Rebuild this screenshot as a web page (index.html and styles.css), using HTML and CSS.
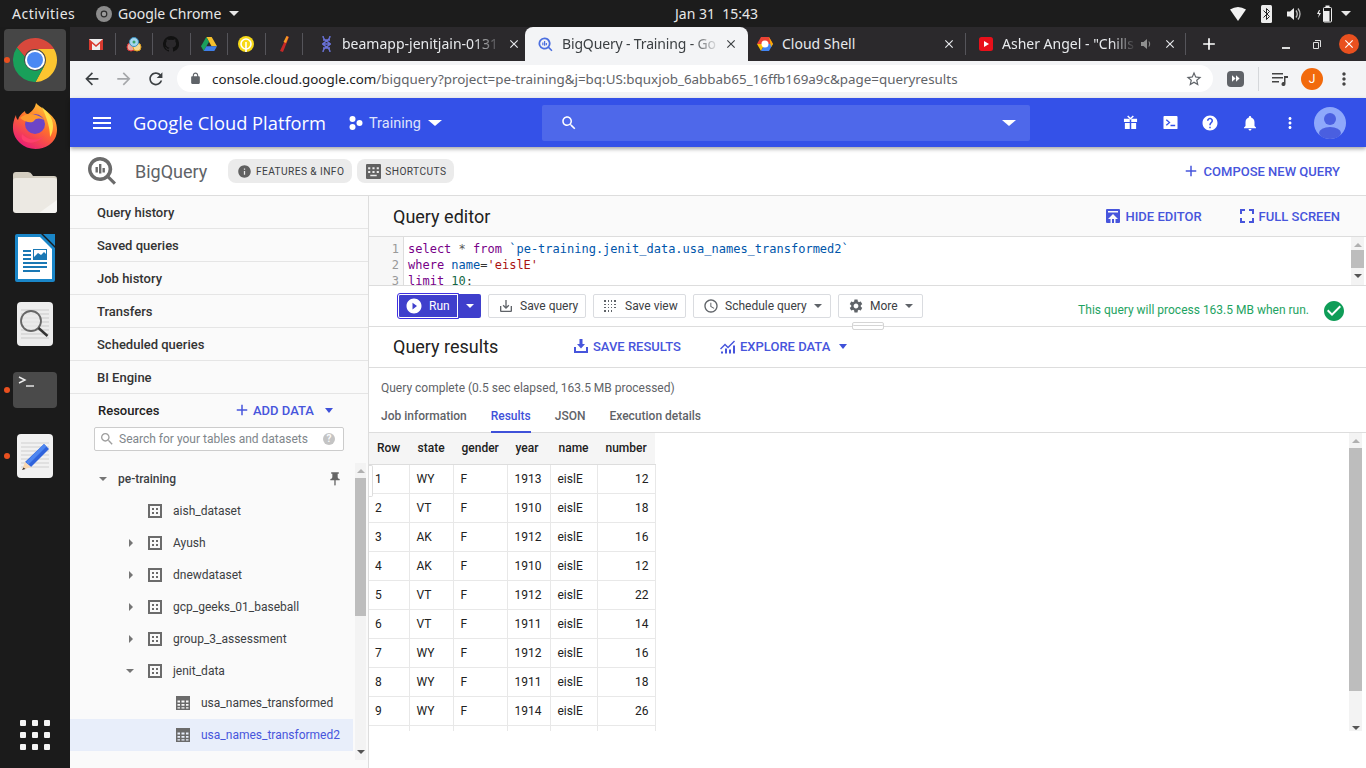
FILE: index.html
```html
<!DOCTYPE html>
<html lang="en">
<head>
    <meta charset="UTF-8">
    <title>BigQuery - Training - Google Cloud Platform</title>
    <link rel="stylesheet" href="styles.css">
</head>
<body>
    <!-- material icons used more than once -->
    <svg class="icon-sheet" aria-hidden="true">
        <symbol id="i-add" viewBox="0 0 24 24"><path d="M19 13h-6v6h-2v-6H5v-2h6V5h2v6h6v2z"/></symbol>
        <symbol id="i-close" viewBox="0 0 24 24"><path d="M19 6.41L17.59 5 12 10.59 6.41 5 5 6.41 10.59 12 5 17.59 6.41 19 12 13.41 17.59 19 19 17.59 13.41 12z"/></symbol>
        <symbol id="i-more" viewBox="0 0 24 24"><path d="M12 8c1.1 0 2-.9 2-2s-.9-2-2-2-2 .9-2 2 .9 2 2 2zm0 2c-1.1 0-2 .9-2 2s.9 2 2 2 2-.9 2-2-.9-2-2-2zm0 6c-1.1 0-2 .9-2 2s.9 2 2 2 2-.9 2-2-.9-2-2-2z"/></symbol>
        <symbol id="i-save" viewBox="0 0 24 24"><path d="M19 12v7H5v-7H3v7c0 1.1.9 2 2 2h14c1.1 0 2-.9 2-2v-7h-2zm-6 .67l2.59-2.58L17 11.5l-5 5-5-5 1.41-1.41L11 12.67V3h2z"/></symbol>
        <symbol id="i-dataset" viewBox="0 0 14 14"><path fill-rule="evenodd" d="M0 0h14v14H0zM2 2v10h10V2z"/><path d="M4 4h2v2H4zM8 4h2v2H8zM4 8h2v2H4zM8 8h2v2H8z"/></symbol>
        <symbol id="i-table" viewBox="0 0 14 14"><path fill-rule="evenodd" d="M0 0h14v14H0zM1.5 4.5v2H4v-2zM5.5 4.5v2h3v-2zM10 4.5v2h2.5v-2zM1.5 8v1.8H4V8zM5.5 8v1.8h3V8zM10 8v1.8h2.5V8zM1.5 11.3v1.2H4v-1.2zM5.5 11.3v1.2h3v-1.2zM10 11.3v1.2h2.5v-1.2z"/></symbol>
        <symbol id="i-bq" viewBox="0 0 30 30"><path d="M13 1a12 12 0 1 0 7.5 21.4l6.3 6.3 2.2-2.2-6.3-6.3A12 12 0 0 0 13 1zm0 3.400a8.600 8.600 0 1 1 0 17.2 8.600 8.600 0 0 1 0-17.2z"/><path d="M8.500 11h2.400v5.500H8.500zM12 8h2.400v9.500H12zM15.500 12h2.400v4.500h-2.400z"/></symbol>
    </svg>

    <div class="topbar">
        <span class="activities">Activities</span>
        <svg class="app-mark" viewBox="0 0 16 16"><circle cx="8" cy="8" r="8" fill="#8c8c8c"/><circle cx="8" cy="8" r="3.4" fill="#2b2b2b"/><circle cx="8" cy="8" r="2.2" fill="#9c9c9c"/></svg>
        <span class="app-name">Google Chrome</span>
        <span class="caret caret-top"></span>
        <span class="clock">Jan 31&nbsp; 15:43</span>
        <div class="tray">
            <svg width="16" height="14" viewBox="0 0 16 14"><path d="M0 2.5Q8-2.500 16 2.5L8 14z" fill="#f2f2f2"/></svg>
            <svg width="11" height="18" viewBox="0 0 11 18"><rect width="11" height="18" rx="1.5" fill="#ececec"/><path d="M2.5 5.500l6 6-3 3v-11l3 3-6 6" fill="none" stroke="#222" stroke-width="1"/></svg>
            <svg width="14" height="14" viewBox="0 0 14 14"><path d="M0 4.500h3L7 1v12L3 9.500H0z" fill="#eee"/><path d="M9 3.500q2.500 3.500 0 7M11 1.500q4 5.500 0 11" fill="none" stroke="#bbb" stroke-width="1.3"/></svg>
            <svg width="17" height="18" viewBox="0 0 17 18"><path d="M3 5L1 9h2l-1 4 3-5H3l1-3z" fill="#eee"/><rect x="7.5" y="2.5" width="8" height="14.5" rx="1" fill="none" stroke="#eee"/><rect x="7.500" y="6" width="6" height="10.5" fill="#eee"/><rect x="9.500" y="0.500" width="4" height="2" fill="#eee"/></svg>
            <span class="caret caret-top tray-caret"></span>
        </div>
    </div>

    <div class="desktop">
        <nav class="dock">
            <div class="dock-item active">
                <span class="run-dot"></span>
                <svg width="44" height="44" viewBox="0 0 44 44">
                    <path d="M3.900 9.500A22 22 0 0 1 41.050 11H22a11 11 0 0 0-10.400 7.600z" fill="#d8483c"/>
                    <path d="M41.050 11A22 22 0 0 1 22.500 44l9-16.500A11 11 0 0 0 22 11z" fill="#fbc530"/>
                    <path d="M3.900 9.500l7.700 9.100a11 11 0 0 0 19.900 8.900L22.500 44A22 22 0 0 1 3.900 9.500z" fill="#19a05a"/>
                    <circle cx="22" cy="22" r="10" fill="#fff"/><circle cx="22" cy="22" r="8" fill="#4a89f3"/>
                </svg>
            </div>
            <div class="dock-item">
                <svg width="46" height="46" viewBox="0 0 46 46">
                    <defs>
                        <linearGradient id="ff-body" x1="0.8" y1="0" x2="0.2" y2="1"><stop offset="0" stop-color="#ffd43a"/><stop offset=".45" stop-color="#ff6f2c"/><stop offset="1" stop-color="#e8147e"/></linearGradient>
                    </defs>
                    <path d="M24 0c3 4 12 7 19 17 4 10 2 20-6 25-9 6-22 5-29-2C0 33-1 22 4 12c0 3 1 4 2 5 1-4 3-6 7-9 0 2 1 3 3 3 3-2 7-5 8-11z" fill="url(#ff-body)"/>
                    <path d="M30 4c5 5 11 10 11 19 0 4-1 8-3 11 0-8-2-16-8-30z" fill="#ffe04a"/>
                    <circle cx="23" cy="21" r="10" fill="#6d45c7"/>
                    <path d="M8 15c4-4 11-5 16-3 4 1 7 3 8 5-4-2-8-2-10 1-2 2-8 2-14-3z" fill="#ff9a2e"/>
                    <path d="M10 31c5 6 15 8 22 2-4 5-12 9-20 5-2-1-3-4-2-7z" fill="#ff3f6c"/>
                </svg>
            </div>
            <div class="dock-item">
                <svg width="44" height="41" viewBox="0 0 44 41"><path d="M3 0h12q3 0 4 2.500l1 1.500h21q3 0 3 3v5H0V3q0-3 3-3z" fill="#d3cdc0"/><rect y="6" width="44" height="35" rx="3" fill="#ece9e3"/><path d="M44 28v10q0 3-3 3H26z" fill="#f6f5f2"/></svg>
            </div>
            <div class="dock-item">
                <svg width="40" height="48" viewBox="0 0 40 48"><path d="M2 0h24l14 14v32a2 2 0 0 1-2 2H2a2 2 0 0 1-2-2V2a2 2 0 0 1 2-2z" fill="#1a86c8"/><path d="M3 3h22l12 12v30H3z" fill="#fff"/><path d="M28 0h12v12z" fill="#1a86c8"/><g fill="#1a78b4"><path d="M8 16h8v2H8zM8 20h8v2H8zM8 24h8v2H8zM8 28h24v2H8zM8 32h24v2H8zM8 36h17v2H8z"/><path fill-rule="evenodd" d="M18 15h14v11H18zM19 16v7l4-4 3 2 3-3 2 2v-4z"/></g></svg>
            </div>
            <div class="dock-item">
                <svg width="36" height="44" viewBox="0 0 36 44"><rect width="36" height="44" rx="4" fill="#ececec"/><path d="M4 8h28M4 12h28M4 16h28M4 20h28M4 24h28M4 28h28M4 32h28M4 36h28" stroke="#c9c9c9"/><circle cx="14" cy="19" r="10" fill="#e9e9e9" fill-opacity=".7" stroke="#666" stroke-width="1.8"/><path d="M21.5 26l9 8" stroke="#333" stroke-width="2.4"/></svg>
            </div>
            <div class="dock-item">
                <span class="run-dot"></span>
                <svg width="44" height="36" viewBox="0 0 44 36"><rect width="44" height="36" rx="4" fill="#4a4a4a"/><path d="M6 5l6 3-6 3" fill="none" stroke="#eee" stroke-width="1.4"/><path d="M13 14h8" stroke="#eee" stroke-width="1.4"/></svg>
            </div>
            <div class="dock-item">
                <span class="run-dot"></span>
                <svg width="36" height="44" viewBox="0 0 36 44"><rect width="36" height="44" rx="4" fill="#f1f1f1"/><path d="M4 9h28M4 13h28M4 17h28M4 21h28M4 25h28M4 29h28M4 33h28" stroke="#cfcfcf"/><path d="M27 10l5 5-18 18-6-5z" fill="#2f63dc"/><path d="M27 10l2.5 2.500-18 18L9 28z" fill="#4d86f0"/><path d="M8 28l6 5-9 3z" fill="#f8d7b0"/><path d="M5 36l1.500-2.500 2 1.500z" fill="#333"/></svg>
            </div>
            <div class="app-grid">
                <span></span><span></span><span></span>
                <span></span><span></span><span></span>
                <span></span><span></span><span></span>
            </div>
        </nav>

        <div class="window">
            <div class="tabstrip">
                <div class="pin"><svg width="14" height="11" viewBox="0 0 14 11"><rect width="14" height="11" fill="#eee"/><path d="M0 0l7 6 7-6v11h-3V4.500L7 8 3 4.500V11H0z" fill="#d93a2f"/></svg></div>
                <div class="pin"><svg width="16" height="16" viewBox="0 0 16 16"><circle cx="5" cy="11" r="4" fill="#e9a8a0" stroke="#d33" stroke-width="1"/><circle cx="11" cy="11" r="4" fill="#f6d88f" stroke="#e0a020" stroke-width="1"/><circle cx="8" cy="6" r="4.5" fill="#a5d7ef" stroke="#3a8fc0" stroke-width="1"/><circle cx="8" cy="6" r="1.5" fill="#38a169"/></svg></div>
                <div class="pin"><svg width="16" height="16" viewBox="0 0 16 16"><path d="M8 0a8 8 0 0 0-2.500 15.600c.4.100.5-.2.500-.4v-1.400c-2.200.5-2.700-1-2.700-1-.4-.9-.9-1.200-.9-1.200-.7-.5.100-.5.100-.5.800.1 1.200.8 1.200.8.700 1.200 1.900.9 2.300.7.100-.5.300-.9.500-1.100-1.800-.2-3.600-.9-3.600-4 0-.9.300-1.600.8-2.100-.1-.2-.4-1 .1-2.100 0 0 .7-.2 2.200.8a7.500 7.500 0 0 1 4 0c1.500-1 2.200-.8 2.200-.8.400 1.100.200 1.900.1 2.100.5.600.8 1.300.8 2.100 0 3.100-1.900 3.800-3.700 4 .3.300.6.800.6 1.500v2.200c0 .2.100.5.600.4A8 8 0 0 0 8 0z" fill="#111"/></svg></div>
                <div class="pin"><svg width="16" height="14" viewBox="0 0 16 14"><path d="M5.300 0h5.400L16 9.300h-5.400z" fill="#f6c02c"/><path d="M5.300 0L0 9.300 2.700 14l5.300-9.300z" fill="#1a9f5c"/><path d="M2.700 14h10.600L16 9.300H5.400z" fill="#3f7ee8"/></svg></div>
                <div class="pin"><svg width="16" height="16" viewBox="0 0 16 16"><circle cx="8" cy="8" r="8" fill="#f7d917"/><circle cx="8" cy="8" r="5" fill="none" stroke="#fff" stroke-width="1.6"/><path d="M8 6v10" stroke="#fff" stroke-width="1.6"/></svg></div>
                <div class="pin"><svg width="10" height="16" viewBox="0 0 10 16"><path d="M8 0l2 1-6 15-3-1z" fill="#c62828"/><path d="M7.500 0l2 1-2.500 6-2.500-1z" fill="#f59a23"/></svg></div>
                <div class="tab beam-tab">
                    <svg width="13" height="18" viewBox="0 0 13 18"><path d="M3 1c0 5 7 6 7 8s-7 3-7 8M10 1c0 5-7 6-7 8s7 3 7 8M3 5h7M2 9h9M3 13h7" fill="none" stroke="#6a72d8" stroke-width="1.4"/></svg>
                    <span class="tab-title">beamapp-jenitjain-0131</span>
                    <svg class="tab-close"><use href="#i-close"/></svg>
                </div>
                <div class="tab tab-active">
                    <svg class="bq-fav"><use href="#i-bq"/></svg>
                    <span class="tab-title">BigQuery - Training - Go</span>
                    <svg class="tab-close"><use href="#i-close"/></svg>
                </div>
                <div class="tab shell-tab">
                    <svg width="16" height="16" viewBox="0 0 16 16"><path d="M4 1h8l4 7H0z" fill="#ea4335"/><path d="M0 8h8l-4 7z" fill="#fbbc05"/><path d="M16 8l-4 7H4l4-7z" fill="#4285f4"/><path d="M12 1l4 7-2 3z" fill="#f9ab00"/><circle cx="8" cy="8" r="3.5" fill="#fff"/></svg>
                    <span class="tab-title">Cloud Shell</span>
                    <svg class="tab-close"><use href="#i-close"/></svg>
                </div>
                <div class="tab yt-tab">
                    <svg width="14" height="14" viewBox="0 0 14 14"><rect width="14" height="14" rx="2.5" fill="#e8101a"/><path d="M5 4l5 3-5 3z" fill="#fff"/></svg>
                    <span class="tab-title">Asher Angel - "Chills</span>
                    <svg class="tab-sound" width="12" height="12" viewBox="0 0 12 12"><path d="M0 4h2.500L6 1v10L2.500 8H0z" fill="#8f8f8f"/><path d="M8 3.500q1.500 2.500 0 5" fill="none" stroke="#8f8f8f"/></svg>
                    <svg class="tab-close"><use href="#i-close"/></svg>
                </div>
                <svg class="new-tab"><use href="#i-add"/></svg>
                <div class="win-controls">
                    <span class="win-min"></span>
                    <svg width="8" height="9" viewBox="0 0 8 9"><path d="M2 .5h5.500V7M.5 2.500h5v6h-5z" fill="none" stroke="#ddd"/></svg>
                    <span class="win-close"><svg width="14" height="14"><use href="#i-close"/></svg></span>
                </div>
            </div>

            <div class="toolbar">
                <svg class="tb-icon"><path d="M20 11H7.830l5.590-5.590L12 4l-8 8 8 8 1.410-1.410L7.830 13H20v-2z" transform="scale(.82)"/></svg>
                <svg class="tb-icon tb-dim"><path d="M12 4l-1.410 1.410L16.170 11H4v2h12.170l-5.580 5.590L12 20l8-8z" transform="scale(.82)"/></svg>
                <svg class="tb-icon"><path d="M17.650 6.350C16.200 4.900 14.210 4 12 4c-4.420 0-7.990 3.580-7.990 8s3.570 8 7.990 8c3.730 0 6.840-2.550 7.730-6h-2.080c-.82 2.330-3.040 4-5.650 4-3.310 0-6-2.690-6-6s2.690-6 6-6c1.660 0 3.140.69 4.220 1.780L13 11h7V4l-2.350 2.350z" transform="scale(.82)"/></svg>
                <div class="omnibox">
                    <svg class="lock" viewBox="0 0 24 24"><path d="M18 8h-1V6c0-2.760-2.240-5-5-5S7 3.240 7 6v2H6c-1.100 0-2 .9-2 2v10c0 1.100.9 2 2 2h12c1.100 0 2-.9 2-2V10c0-1.100-.9-2-2-2zM9 6c0-1.660 1.340-3 3-3s3 1.340 3 3v2H9V6z"/></svg>
                    <span class="url"><b>console.cloud.google.com</b>/bigquery?project=pe-training&amp;j=bq:US:bquxjob_6abbab65_16ffb169a9c&amp;page=queryresults</span>
                    <svg class="star" viewBox="0 0 24 24"><path d="M22 9.240l-7.190-.62L12 2 9.190 8.630 2 9.240l5.460 4.730L5.820 21 12 17.270 18.180 21l-1.630-7.030L22 9.240zM12 15.400l-3.760 2.270 1-4.280-3.320-2.880 4.380-.38L12 6.100l1.710 4.040 4.380.38-3.320 2.880 1 4.280L12 15.400z"/></svg>
                </div>
                <span class="ext-btn"><svg width="8" height="7" viewBox="0 0 10 8"><path d="M0 0l4.500 4L0 8zM5 0l4.500 4L5 8z" fill="#fff"/></svg></span>
                <span class="tb-sep"></span>
                <svg class="media-btn" width="16" height="14" viewBox="0 0 16 14"><path d="M0 1h11v1.500H0zM0 5h11v1.500H0zM0 9h7v1.500H0z" fill="#444"/><path d="M12 4h4v2h-2.500v6a2 2 0 1 1-1.500-1.900z" fill="#444"/></svg>
                <span class="profile">J</span>
                <svg class="tb-more"><use href="#i-more"/></svg>
            </div>

            <header class="gcp-bar">
                <svg class="gcp-menu" viewBox="0 0 24 24"><path d="M3 18h18v-2H3v2zm0-5h18v-2H3v2zm0-7v2h18V6H3z"/></svg>
                <span class="gcp-title">Google Cloud Platform</span>
                <svg class="project-dots" width="14" height="14" viewBox="0 0 14 14"><circle cx="3.5" cy="3" r="3"/><circle cx="3.5" cy="11" r="3"/><circle cx="10.5" cy="7" r="3"/></svg>
                <span class="project-name">Training</span>
                <span class="caret caret-white"></span>
                <div class="gcp-search">
                    <svg class="gcp-search-icon" viewBox="0 0 24 24"><path d="M15.500 14h-.79l-.28-.27C15.410 12.590 16 11.110 16 9.500 16 5.910 13.090 3 9.500 3S3 5.910 3 9.500 5.910 16 9.500 16c1.610 0 3.090-.59 4.230-1.570l.27.28v.79l5 4.990L20.490 19l-4.990-5zm-6 0C7.010 14 5 11.990 5 9.500S7.010 5 9.500 5 14 7.010 14 9.500 11.990 14 9.500 14z"/></svg>
                    <span class="caret caret-white"></span>
                </div>
                <div class="gcp-actions">
                    <svg class="act-sm" viewBox="0 0 16 16"><path d="M1 4h14v3.500H8.800V4H7.200v3.500H1zM2 8.500h5.200V15H2zM8.800 8.500H14V15H8.800z"/><path d="M5 1l3 3 3-3" fill="none" stroke="#fff" stroke-width="1.6"/></svg>
                    <svg class="act-sm" viewBox="0 0 16 16"><path fill-rule="evenodd" d="M1.500 1h13a1 1 0 0 1 1 1v12a1 1 0 0 1-1 1h-13a1 1 0 0 1-1-1V2a1 1 0 0 1 1-1zM3 5.500l3 2.500-3 2.500 1 1L8 8 4 4.500zM8 10.500V12h5v-1.500z"/></svg>
                    <svg viewBox="0 0 24 24"><path d="M12 2C6.480 2 2 6.480 2 12s4.480 10 10 10 10-4.480 10-10S17.520 2 12 2zm1 17h-2v-2h2v2zm2.070-7.750l-.9.920C13.450 12.900 13 13.500 13 15h-2v-.5c0-1.100.45-2.100 1.170-2.830l1.240-1.260c.37-.36.59-.86.59-1.410 0-1.100-.9-2-2-2s-2 .9-2 2H8c0-2.210 1.790-4 4-4s4 1.790 4 4c0 .88-.36 1.680-.93 2.250z"/></svg>
                    <svg viewBox="0 0 24 24"><path d="M12 22c1.100 0 2-.9 2-2h-4c0 1.100.89 2 2 2zm6-6v-5c0-3.070-1.640-5.640-4.500-6.320V4c0-.83-.67-1.500-1.500-1.500s-1.500.67-1.500 1.500v.68C7.630 5.360 6 7.920 6 11v5l-2 2v1h16v-1l-2-2z"/></svg>
                    <svg><use href="#i-more"/></svg>
                    <span class="avatar"><svg width="32" height="32" viewBox="0 0 32 32"><circle cx="16" cy="16" r="16" fill="#8ea8fb"/><circle cx="16" cy="12" r="6" fill="#4a5fe0"/><ellipse cx="16" cy="26" rx="11" ry="6" fill="#4a5fe0"/></svg></span>
                </div>
            </header>

            <div class="subbar">
                <svg class="bq-logo"><use href="#i-bq"/></svg>
                <span class="bq-name">BigQuery</span>
                <span class="chip">
                    <svg viewBox="0 0 24 24"><path d="M12 2C6.480 2 2 6.480 2 12s4.480 10 10 10 10-4.480 10-10S17.520 2 12 2zm1 15h-2v-6h2v6zm0-8h-2V7h2v2z"/></svg>
                    FEATURES &amp; INFO
                </span>
                <span class="chip">
                    <svg viewBox="0 0 14 14"><path fill-rule="evenodd" d="M1 0h12a1 1 0 0 1 1 1v12a1 1 0 0 1-1 1H1a1 1 0 0 1-1-1V1a1 1 0 0 1 1-1zM2 3v2h2V3zM6 3v2h2V3zM10 3v2h2V3zM2 6.500v2h2v-2zM6 6.500v2h2v-2zM10 6.500v2h2v-2zM4 10v1.500h6V10z"/></svg>
                    SHORTCUTS
                </span>
                <a class="link-btn compose"><svg><use href="#i-add"/></svg>COMPOSE NEW QUERY</a>
            </div>

            <div class="content">
                <aside class="sidebar">
                    <div class="side-link">Query history</div>
                    <div class="side-link">Saved queries</div>
                    <div class="side-link">Job history</div>
                    <div class="side-link">Transfers</div>
                    <div class="side-link">Scheduled queries</div>
                    <div class="side-link">BI Engine</div>
                    <div class="resources-head">
                        <span class="resources-title">Resources</span>
                        <a class="link-btn add-data"><svg><use href="#i-add"/></svg>ADD DATA</a>
                        <span class="caret caret-blue"></span>
                    </div>
                    <div class="tree-search">
                        <svg class="tree-search-icon" viewBox="0 0 24 24"><path d="M15.500 14h-.79l-.28-.27C15.410 12.590 16 11.110 16 9.500 16 5.910 13.090 3 9.500 3S3 5.910 3 9.500 5.910 16 9.500 16c1.610 0 3.090-.59 4.230-1.570l.27.28v.79l5 4.990L20.490 19l-4.990-5zm-6 0C7.010 14 5 11.990 5 9.500S7.010 5 9.500 5 14 7.010 14 9.500 11.990 14 9.500 14z"/></svg>
                        <span class="tree-search-text">Search for your tables and datasets</span>
                        <span class="help-dot">?</span>
                    </div>
                    <div class="tree-wrap">
                        <ul class="tree">
                            <li class="tree-row project">
                                <span class="tw tw-open"></span>
                                <span class="tree-label">pe-training</span>
                                <svg class="pin-icon" viewBox="0 0 24 24"><path d="M16 9V4h1c.55 0 1-.45 1-1s-.45-1-1-1H7c-.55 0-1 .45-1 1s.45 1 1 1h1v5c0 1.660-1.340 3-3 3v2h5.970v7l1 1 1-1v-7H19v-2c-1.660 0-3-1.340-3-3z"/></svg>
                            </li>
                            <li class="tree-row dataset"><span class="tw"></span><svg class="node"><use href="#i-dataset"/></svg><span class="tree-label">aish_dataset</span></li>
                            <li class="tree-row dataset"><span class="tw tw-closed"></span><svg class="node"><use href="#i-dataset"/></svg><span class="tree-label">Ayush</span></li>
                            <li class="tree-row dataset"><span class="tw tw-closed"></span><svg class="node"><use href="#i-dataset"/></svg><span class="tree-label">dnewdataset</span></li>
                            <li class="tree-row dataset"><span class="tw tw-closed"></span><svg class="node"><use href="#i-dataset"/></svg><span class="tree-label">gcp_geeks_01_baseball</span></li>
                            <li class="tree-row dataset"><span class="tw tw-closed"></span><svg class="node"><use href="#i-dataset"/></svg><span class="tree-label">group_3_assessment</span></li>
                            <li class="tree-row dataset"><span class="tw tw-open"></span><svg class="node"><use href="#i-dataset"/></svg><span class="tree-label">jenit_data</span></li>
                            <li class="tree-row tbl"><svg class="node"><use href="#i-table"/></svg><span class="tree-label">usa_names_transformed</span></li>
                            <li class="tree-row tbl selected"><svg class="node"><use href="#i-table"/></svg><span class="tree-label">usa_names_transformed2</span></li>
                        </ul>
                        <div class="scrollbar tree-scroll">
                            <span class="arr arr-up"></span>
                            <span class="thumb"></span>
                            <span class="arr arr-down"></span>
                        </div>
                    </div>
                </aside>

                <main class="main">
                    <div class="panel-head">
                        <h2>Query editor</h2>
                        <a class="link-btn hide-ed">
                            <svg viewBox="0 0 14 14"><path fill-rule="evenodd" d="M1 0h12a1 1 0 0 1 1 1v12a1 1 0 0 1-1 1H9.500v-4H12L7 5 2 10h2.500v4H1a1 1 0 0 1-1-1V1a1 1 0 0 1 1-1zM2 2v1.500h10V2zM6 10h2v4H6z"/></svg>
                            HIDE EDITOR
                        </a>
                        <a class="link-btn"><svg viewBox="5 5 14 14"><path d="M7 14H5v5h5v-2H7v-3zm-2-4h2V7h3V5H5v5zm12 7h-3v2h5v-5h-2v3zM14 5v2h3v3h2V5h-5z"/></svg>FULL SCREEN</a>
                    </div>

                    <div class="editor">
                        <div class="gutter"><div>1</div><div>2</div><div>3</div></div>
                        <pre class="code"><span class="kw">select</span> <span class="op">*</span> <span class="kw">from</span> <span class="ident">`pe-training.jenit_data.usa_names_transformed2`</span>
<span class="kw">where</span> <span class="ident">name</span>=<span class="str">'eislE'</span>
<span class="kw">limit</span> <span class="num">10</span>;</pre>
                        <div class="scrollbar editor-scroll">
                            <span class="arr arr-up"></span>
                            <span class="thumb"></span>
                            <span class="arr arr-down"></span>
                        </div>
                    </div>

                    <div class="actions">
                        <div class="run-group">
                            <span class="run-btn">
                                <svg viewBox="0 0 24 24"><path d="M12 2C6.480 2 2 6.480 2 12s4.480 10 10 10 10-4.480 10-10S17.520 2 12 2zm-2 14.500v-9l6 4.500-6 4.500z"/></svg>
                                Run
                            </span>
                            <span class="run-more"><span class="caret caret-white-sm"></span></span>
                        </div>
                        <span class="btn btn-save"><svg viewBox="0 0 24 24"><use href="#i-save"/></svg>Save query</span>
                        <span class="btn btn-view">
                            <svg viewBox="0 0 16 16"><path d="M1 2h2v2H1zM5 2h1v2H5zM8 2h1v2H8zM11 2h2v2h-2zM1 6h2v1H1zM5 6h1v1H5zM8 6h1v1H8zM11 6h2v1h-2zM1 9h2v1H1zM5 9h1v1H5zM8 9h1v1H8zM11 9h2v1h-2zM1 12h2v2H1zM5 12h1v2H5zM8 12h1v2H8z"/></svg>
                            Save view
                        </span>
                        <span class="btn btn-sched">
                            <svg viewBox="0 0 24 24"><path d="M11.990 2C6.470 2 2 6.480 2 12s4.470 10 9.990 10C17.520 22 22 17.520 22 12S17.520 2 11.990 2zM12 20c-4.420 0-8-3.580-8-8s3.580-8 8-8 8 3.580 8 8-3.580 8-8 8zm.5-13H11v6l5.250 3.150.75-1.230-4.500-2.670z"/></svg>
                            Schedule query
                            <span class="caret caret-grey"></span>
                        </span>
                        <span class="btn btn-more">
                            <svg viewBox="0 0 24 24"><path d="M19.140 12.940c.04-.3.06-.61.06-.94 0-.32-.02-.64-.07-.94l2.030-1.580c.18-.14.23-.41.12-.61l-1.920-3.320c-.12-.22-.37-.29-.59-.22l-2.390.96c-.5-.38-1.030-.7-1.620-.94l-.36-2.540c-.04-.24-.24-.41-.48-.41h-3.840c-.24 0-.43.17-.47.41l-.36 2.540c-.59.24-1.130.57-1.620.94l-2.390-.96c-.22-.08-.47 0-.59.22L2.740 8.870c-.12.21-.08.47.12.61l2.030 1.580c-.05.3-.09.63-.09.94s.02.64.07.94l-2.030 1.580c-.18.14-.23.41-.12.61l1.920 3.320c.12.22.37.29.59.22l2.390-.96c.5.38 1.030.7 1.620.94l.36 2.540c.05.24.24.41.48.41h3.840c.24 0 .44-.17.47-.41l.36-2.540c.59-.24 1.130-.56 1.620-.94l2.390.96c.22.08.47 0 .59-.22l1.920-3.320c.12-.22.07-.47-.12-.61l-2.010-1.580zM12 15.600c-1.980 0-3.600-1.620-3.600-3.600s1.620-3.600 3.600-3.600 3.600 1.620 3.600 3.600-1.620 3.600-3.600 3.600z"/></svg>
                            More
                            <span class="caret caret-grey"></span>
                        </span>
                        <span class="validator">This query will process 163.5 MB when run.</span>
                        <svg class="check" viewBox="2 2 20 20"><path d="M12 2C6.480 2 2 6.480 2 12s4.480 10 10 10 10-4.480 10-10S17.520 2 12 2zm-2 15l-5-5 1.410-1.410L10 14.170l7.590-7.590L19 8l-9 9z"/></svg>
                        <span class="drag-handle"></span>
                    </div>

                    <div class="results-head">
                        <h2>Query results</h2>
                        <a class="link-btn save-results"><svg viewBox="0 0 14 14"><path d="M5.500 0h3v5H11L7 9.500 3 5h2.500zM0 8h2v4h10V8h2v6H0z"/></svg>SAVE RESULTS</a>
                        <a class="link-btn explore"><svg viewBox="0 0 16 14"><path d="M0 9l5-5 3 3 6-6 1 1-7 7-3-3-4 4zM1 12h2v2H1zM5 9h2v5H5zM9 10h2v4H9zM13 6h2v8h-2z"/></svg>EXPLORE DATA</a>
                        <span class="caret caret-blue"></span>
                    </div>

                    <div class="job-status">Query complete (0.5 sec elapsed, 163.5 MB processed)</div>
                    <div class="result-tabs">
                        <span>Job information</span>
                        <span class="current">Results</span>
                        <span>JSON</span>
                        <span>Execution details</span>
                    </div>

                    <div class="table-wrap">
                        <div class="table-area">
                            <span class="collapse-tab"></span>
                            <table class="results">
                                <thead>
                                    <tr><th class="c-row">Row</th><th class="c-state">state</th><th class="c-gender">gender</th><th class="c-year">year</th><th class="c-name">name</th><th class="c-num">number</th></tr>
                                </thead>
                                <tbody>
                                    <tr><td>1</td><td>WY</td><td>F</td><td>1913</td><td>eislE</td><td class="right">12</td></tr>
                                    <tr><td>2</td><td>VT</td><td>F</td><td>1910</td><td>eislE</td><td class="right">18</td></tr>
                                    <tr><td>3</td><td>AK</td><td>F</td><td>1912</td><td>eislE</td><td class="right">16</td></tr>
                                    <tr><td>4</td><td>AK</td><td>F</td><td>1910</td><td>eislE</td><td class="right">12</td></tr>
                                    <tr><td>5</td><td>VT</td><td>F</td><td>1912</td><td>eislE</td><td class="right">22</td></tr>
                                    <tr><td>6</td><td>VT</td><td>F</td><td>1911</td><td>eislE</td><td class="right">14</td></tr>
                                    <tr><td>7</td><td>WY</td><td>F</td><td>1912</td><td>eislE</td><td class="right">16</td></tr>
                                    <tr><td>8</td><td>WY</td><td>F</td><td>1911</td><td>eislE</td><td class="right">18</td></tr>
                                    <tr><td>9</td><td>WY</td><td>F</td><td>1914</td><td>eislE</td><td class="right">26</td></tr>
                                    <tr><td></td><td></td><td></td><td></td><td></td><td></td></tr>
                                </tbody>
                            </table>
                        </div>
                        <div class="scrollbar table-scroll">
                            <span class="arr arr-up"></span>
                            <span class="thumb"></span>
                            <span class="arr arr-down"></span>
                        </div>
                    </div>
                </main>
            </div>
        </div>
    </div>
</body>
</html>
```

FILE: styles.css
```css
* {
    box-sizing: border-box;
}
html, body {
    margin: 0;
    width: 1366px;
    height: 768px;
    overflow: hidden;
}
body {
    font-family: Roboto, "Liberation Sans", sans-serif;
    font-size: 13px;
    color: #212121;
    background-color: #1b1b1b;
}
.icon-sheet {
    display: none;
}
h2 {
    margin: 0;
    font-size: 18px;
    font-weight: 400;
    color: #212121;
}

/* carets */
.caret {
    display: inline-block;
    width: 0;
    height: 0;
    border-left: 5px solid transparent;
    border-right: 5px solid transparent;
    border-top: 5px solid #333;
    flex: none;
}
.caret-top {
    border-top-color: #e6e6e6;
}
.caret-white {
    border-left-width: 7px;
    border-right-width: 7px;
    border-top: 6px solid #fff;
}
.caret-white-sm {
    border-top-color: #fff;
    border-left-width: 4.5px;
    border-right-width: 4.5px;
    border-top-width: 4.5px;
}
.caret-blue {
    border-left-width: 4.5px;
    border-right-width: 4.5px;
    border-top-color: #3f51d9;
}
.caret-grey {
    border-left-width: 4.5px;
    border-right-width: 4.5px;
    border-top-color: #5f6368;
    border-top-width: 4.5px;
}

/* gnome top bar */
.topbar {
    height: 27px;
    display: flex;
    align-items: center;
    padding-left: 12px;
    background-color: #1c1c1c;
    color: #e8e8e8;
    font-family: "Noto Sans", sans-serif;
    font-size: 14px;
}
.activities {
    width: 84px;
    letter-spacing: 0.5px;
}
.app-mark {
    width: 16px;
    height: 16px;
    margin-right: 6px;
}
.app-name {
    width: 111px;
}
.clock {
    margin-left: 436px;
    width: 90px;
    white-space: nowrap;
    font-size: 14px;
}
.tray {
    margin-left: auto;
    display: flex;
    align-items: center;
    gap: 15px;
    padding-right: 15px;
}
.tray-caret {
    margin-left: -7px;
}

/* dock */
.desktop {
    display: flex;
    height: 741px;
}
.dock {
    width: 70px;
    flex: none;
    display: flex;
    flex-direction: column;
    align-items: center;
    background-color: #1b1b1b;
}
.dock-item {
    position: relative;
    width: 62px;
    height: 66px;
    flex: none;
    display: flex;
    align-items: center;
    justify-content: center;
}
.dock-item.active::before {
    content: "";
    position: absolute;
    left: 0;
    top: 2px;
    width: 62px;
    height: 62px;
    border-radius: 4px;
    background-color: #464646;
}
.dock-item svg {
    position: relative;
}
.run-dot {
    position: absolute;
    left: 0;
    top: 30px;
    width: 6px;
    height: 6px;
    border-radius: 50%;
    background-color: #e9501f;
    z-index: 1;
}
.app-grid {
    margin-top: auto;
    margin-bottom: 18px;
    display: grid;
    grid-template-columns: repeat(3, 6px);
    grid-auto-rows: 6px;
    gap: 6px;
}
.app-grid span {
    background-color: #f4f4f4;
    border-radius: 1px;
}

/* chrome window */
.window {
    flex: 1;
    min-width: 0;
    display: flex;
    flex-direction: column;
    background-color: #fff;
}
.tabstrip {
    height: 34px;
    flex: none;
    display: flex;
    align-items: center;
    padding-left: 8px;
    background-color: #2b292c;
    color: #e8eaed;
    font-family: "Noto Sans", sans-serif;
    font-size: 14px;
}
.pin {
    width: 37.5px;
    height: 22px;
    flex: none;
    display: flex;
    align-items: center;
    justify-content: center;
    border-right: 1px solid #55545a;
}
.tab {
    height: 34px;
    flex: none;
    display: flex;
    align-items: center;
}
.tab-title {
    flex: 1;
    min-width: 0;
    margin-top: -2px;
    white-space: nowrap;
    overflow: hidden;
    -webkit-mask-image: linear-gradient(to right, #000 82%, transparent 100%);
}
.tab-close {
    width: 14px;
    height: 14px;
    flex: none;
    fill: currentColor;
}
.beam-tab {
    width: 222px;
    padding: 0 4px 0 17px;
}
.beam-tab .tab-title {
    margin-left: 9px;
    margin-right: 5px;
}
.tab-active {
    width: 223px;
    padding: 0 10px 0 13px;
    border-radius: 8px 8px 0 0;
    background-color: #f3f4f6;
    color: #3c4043;
}
.bq-fav {
    width: 15px;
    height: 15px;
    flex: none;
    fill: #4b6fe0;
}
.tab-active .tab-title {
    margin-left: 9px;
    margin-right: 4px;
    letter-spacing: -0.15px;
}
.shell-tab {
    width: 218px;
    padding: 0 9px 0 9px;
    border-right: 1px solid #55545a;
    height: 22px;
}
.shell-tab .tab-title {
    margin-left: 9px;
    -webkit-mask-image: none;
}
.yt-tab {
    width: 220px;
    padding: 0 8px 0 13px;
    border-right: 1px solid #55545a;
    height: 22px;
}
.yt-tab .tab-title {
    margin-left: 9px;
    margin-right: 5px;
}
.tab-sound {
    margin-right: 10px;
    flex: none;
}
.new-tab {
    width: 20px;
    height: 20px;
    margin-left: 13px;
    fill: #fff;
    flex: none;
}
.win-controls {
    margin-left: auto;
    display: flex;
    align-items: center;
    padding-right: 7px;
}
.win-min {
    width: 8px;
    height: 2px;
    margin-top: 7px;
    margin-right: 23px;
    background-color: #ddd;
}
.win-close {
    width: 20px;
    height: 20px;
    margin-left: 18px;
    border-radius: 50%;
    background-color: #e9501f;
    display: flex;
    align-items: center;
    justify-content: center;
    fill: #fff;
}

.toolbar {
    height: 37px;
    flex: none;
    display: flex;
    align-items: center;
    padding: 0 10px 2px 12px;
    background-color: #f3f4f6;
}
.tb-icon {
    width: 20px;
    height: 20px;
    margin-right: 12px;
    fill: #3c4043;
    flex: none;
}
.tb-dim {
    fill: #a5a7aa;
}
.omnibox {
    width: 1036px;
    height: 27px;
    margin-left: -1px;
    display: flex;
    align-items: center;
    padding: 0 10px 0 12px;
    border-radius: 14px;
    background-color: #fff;
}
.lock {
    width: 13px;
    height: 13px;
    fill: #5f6368;
    flex: none;
}
.url {
    margin-left: 10px;
    font-family: "Noto Sans", sans-serif;
    font-size: 13.4px;
    color: #5f6368;
    white-space: nowrap;
}
.url b {
    font-weight: 400;
    color: #202124;
}
.star {
    width: 18px;
    height: 18px;
    margin-left: auto;
    fill: #5f6368;
}
.ext-btn {
    width: 17px;
    height: 16px;
    margin-left: 14px;
    border-radius: 4px;
    background-color: #606368;
    display: flex;
    align-items: center;
    justify-content: center;
    flex: none;
}
.tb-sep {
    width: 1px;
    height: 24px;
    margin-left: 14px;
    background-color: #d5d7da;
}
.media-btn {
    margin-left: 13px;
    flex: none;
}
.profile {
    width: 22px;
    height: 22px;
    margin-left: 13px;
    border-radius: 50%;
    background-color: #f26a0c;
    color: #fff;
    font-size: 12px;
    display: flex;
    align-items: center;
    justify-content: center;
    flex: none;
}
.tb-more {
    width: 20px;
    height: 20px;
    margin-left: 11px;
    fill: #444;
    flex: none;
}

/* cloud console header */
.gcp-bar {
    height: 49px;
    flex: none;
    display: flex;
    align-items: center;
    padding-left: 20px;
    background-color: #3451e8;
    color: #fff;
    box-shadow: 0 2px 4px rgba(0, 0, 0, 0.35);
    position: relative;
}
.gcp-menu {
    width: 24px;
    height: 24px;
    fill: #fff;
    flex: none;
}
.gcp-title {
    margin-left: 19px;
    width: 216px;
    font-family: "Open Sans", Roboto, sans-serif;
    font-size: 18.3px;
    white-space: nowrap;
}
.project-dots {
    fill: #fff;
    flex: none;
}
.project-name {
    margin-left: 6px;
    margin-top: 2px;
    width: 59px;
    font-size: 14.5px;
    color: #dfe4fc;
}
.gcp-search {
    width: 488px;
    height: 36px;
    margin-left: 100px;
    display: flex;
    align-items: center;
    justify-content: space-between;
    padding: 0 14px 0 18px;
    border-radius: 2px;
    background-color: #4e68ea;
}
.gcp-search-icon {
    width: 18px;
    height: 18px;
    fill: #fff;
}
.gcp-actions {
    margin-left: auto;
    padding-right: 20px;
    display: flex;
    align-items: center;
    gap: 22px;
}
.gcp-actions svg {
    width: 18px;
    height: 18px;
    fill: #fff;
    display: block;
}
.gcp-actions .act-sm {
    width: 15px;
    height: 15px;
    margin: 0 1.5px;
}
.gcp-actions .avatar {
    width: 32px;
    height: 32px;
    margin-left: -7px;
}
.gcp-actions .avatar svg {
    width: 32px;
    height: 32px;
}

.subbar {
    height: 49px;
    flex: none;
    display: flex;
    align-items: center;
    padding: 0 26px 0 17px;
    border-bottom: 1px solid #ddd;
}
.bq-logo {
    width: 30px;
    height: 30px;
    fill: #6b6b6b;
    flex: none;
}
.bq-name {
    margin-left: 18px;
    width: 93px;
    font-size: 18px;
    color: #5f6368;
}
.chip {
    height: 24px;
    display: inline-flex;
    align-items: center;
    gap: 4px;
    padding: 0 8px 0 9px;
    margin-right: 5px;
    border-radius: 8px;
    background-color: #ebebeb;
    font-size: 10.2px;
    letter-spacing: 0.4px;
    color: #3c4043;
    white-space: nowrap;
}
.chip svg {
    width: 15px;
    height: 15px;
    fill: #616161;
    flex: none;
}
.link-btn {
    display: inline-flex;
    align-items: center;
    font-size: 13px;
    font-weight: 500;
    color: #4755dc;
    white-space: nowrap;
}
.link-btn svg {
    width: 14px;
    height: 14px;
    margin-right: 5px;
    fill: #4755dc;
    flex: none;
}
.compose {
    margin-left: auto;
}
.compose svg {
    width: 18px;
    height: 18px;
    margin-right: 4px;
}

.content {
    flex: 1;
    min-height: 0;
    display: flex;
}

/* left nav */
.sidebar {
    width: 299px;
    flex: none;
    display: flex;
    flex-direction: column;
    background-color: #fafafa;
    border-right: 1px solid #ddd;
}
.side-link {
    height: 33px;
    flex: none;
    display: flex;
    align-items: center;
    padding-left: 27px;
    border-bottom: 1px solid #e5e5e5;
    font-size: 13px;
    font-weight: 500;
    color: #333;
}
.resources-head {
    height: 33px;
    flex: none;
    display: flex;
    align-items: center;
    padding: 0 0 1px 28px;
}
.resources-title {
    width: 135px;
    font-size: 13px;
    font-weight: 500;
    color: #212121;
}
.add-data svg {
    width: 18px;
    height: 18px;
    margin-right: 2px;
}
.add-data + .caret {
    margin-left: 11px;
}
.tree-search {
    width: 250px;
    height: 24px;
    flex: none;
    margin-left: 24px;
    display: flex;
    align-items: center;
    padding: 0 8px 0 4px;
    border: 1px solid #ccc;
    border-radius: 2px;
    background-color: #fff;
}
.tree-search-icon {
    width: 16px;
    height: 16px;
    fill: #9e9e9e;
    flex: none;
}
.tree-search-text {
    margin-left: 4px;
    font-size: 12px;
    color: #80868b;
    white-space: nowrap;
}
.help-dot {
    margin-left: auto;
    width: 12px;
    height: 12px;
    border-radius: 50%;
    background-color: #c4c4c4;
    color: #fafafa;
    font-size: 10px;
    font-weight: 700;
    line-height: 12px;
    text-align: center;
}
.tree-wrap {
    height: 297px;
    flex: none;
    margin-top: 12px;
    display: flex;
}
.tree {
    width: 283px;
    flex: none;
    margin: 0;
    padding: 0;
    list-style: none;
}
.tree-row {
    height: 32px;
    display: flex;
    align-items: center;
    font-size: 12px;
    color: #3c4043;
    white-space: nowrap;
}
.tw {
    width: 9px;
    height: 9px;
    flex: none;
    position: relative;
}
.tw-open::before {
    content: "";
    position: absolute;
    top: 2px;
    left: 0;
    border-left: 4.5px solid transparent;
    border-right: 4.5px solid transparent;
    border-top: 4.5px solid #757575;
}
.tw-closed::before {
    content: "";
    position: absolute;
    top: 0;
    left: 3px;
    border-top: 4.5px solid transparent;
    border-bottom: 4.5px solid transparent;
    border-left: 4.5px solid #757575;
}
.project {
    padding-left: 29px;
    font-weight: 500;
}
.project .tree-label {
    margin-left: 10px;
}
.pin-icon {
    width: 16px;
    height: 16px;
    margin-left: auto;
    margin-right: 10px;
    fill: #666;
}
.dataset {
    padding-left: 56px;
}
.node {
    width: 14px;
    height: 14px;
    flex: none;
    fill: #6b6b6b;
}
.dataset .node {
    margin-left: 13px;
}
.dataset .tree-label {
    margin-left: 11px;
}
.tbl {
    padding-left: 106px;
}
.tbl .tree-label {
    margin-left: 11px;
}
.selected {
    background-color: #e8eefa;
    color: #4755dc;
}

/* fake scrollbars */
.scrollbar {
    flex: none;
    display: flex;
    flex-direction: column;
    align-items: center;
    background-color: #f3f3f3;
}
.arr {
    width: 0;
    height: 0;
    flex: none;
    border-left: 4px solid transparent;
    border-right: 4px solid transparent;
}
.arr-up {
    border-bottom: 4px solid #b0b0b0;
}
.arr-down {
    border-top: 4px solid #555;
}
.thumb {
    width: 100%;
    background-color: #bdbdbd;
    flex: none;
}
.tree-scroll {
    width: 11px;
    margin-left: 2px;
    padding: 6px 0;
}
.tree-scroll .thumb {
    height: 138px;
    margin: 5px 0 134px;
}
.editor-scroll {
    width: 13px;
    margin: 0 2px 0 auto;
    padding: 6px 0;
}
.editor-scroll .thumb {
    height: 18px;
    margin: 3px 0 6px;
}
.table-scroll {
    width: 13px;
    margin-right: 4px;
    padding: 6px 0;
}
.table-scroll .thumb {
    height: 243px;
    margin: 5px 0 35px;
}

/* main column */
.main {
    flex: 1;
    min-width: 0;
    display: flex;
    flex-direction: column;
}
.panel-head {
    height: 41px;
    flex: none;
    display: flex;
    align-items: center;
    padding: 0 26px 0 24px;
    background-color: #fafafa;
    border-bottom: 1px solid #ddd;
}
.hide-ed {
    margin-left: auto;
    margin-right: 38px;
}
.editor {
    height: 49px;
    flex: none;
    display: flex;
    border-bottom: 1px solid #ddd;
    overflow: hidden;
}
.gutter {
    width: 35px;
    flex: none;
    padding: 4px 4px 0 0;
    background-color: #f7f7f7;
    border-right: 1px solid #ddd;
    font-family: "DejaVu Sans Mono", monospace;
    font-size: 12px;
    line-height: 16px;
    text-align: right;
    color: #999;
}
.code {
    margin: 0;
    padding: 4px 0 0 4px;
    font-family: "DejaVu Sans Mono", monospace;
    font-size: 12px;
    line-height: 16px;
    color: #333;
}
.kw { color: #708; }
.op { color: #555; }
.ident { color: #05a; }
.str { color: #a11; }
.num { color: #164; }

.actions {
    position: relative;
    height: 41px;
    flex: none;
    display: flex;
    align-items: center;
    padding: 0 22px 0 29px;
    gap: 7px;
    border-bottom: 1px solid #ddd;
}
.run-group {
    display: flex;
    height: 24px;
}
.run-btn {
    width: 60px;
    display: flex;
    align-items: center;
    gap: 6px;
    padding-left: 6px;
    border: 1px solid #fff;
    outline: 1px solid #3f2fe0;
    background-color: #3f3fcc;
    border-radius: 2px 0 0 2px;
    color: #fff;
    font-size: 12px;
}
.run-btn svg {
    width: 18px;
    height: 18px;
    fill: #fff;
    flex: none;
}
.run-more {
    width: 23px;
    display: flex;
    align-items: center;
    justify-content: center;
    background-color: #3f3fcc;
    border-radius: 0 2px 2px 0;
}
.btn {
    height: 24px;
    display: inline-flex;
    align-items: center;
    padding-left: 9px;
    border: 1px solid #dadce0;
    border-radius: 2px;
    background-color: #fff;
    font-size: 12px;
    color: #3c4043;
    white-space: nowrap;
}
.btn svg {
    width: 16px;
    height: 16px;
    margin-right: 6px;
    fill: #5f6368;
    flex: none;
}
.btn .caret {
    margin-left: 7px;
}
.btn-save { width: 98px; }
.btn-view { width: 93px; }
.btn-sched { width: 138px; }
.btn-more { width: 85px; }
.validator {
    margin-left: auto;
    margin-top: 7px;
    font-size: 12px;
    color: #1ea362;
}
.check {
    width: 20px;
    height: 20px;
    margin-left: 8px;
    margin-top: 9px;
    fill: #0f9d58;
    flex: none;
}
.drag-handle {
    position: absolute;
    left: 483px;
    top: 36px;
    width: 32px;
    height: 8px;
    border: 1px solid #d5d5d5;
    border-radius: 2px;
    background-color: #fff;
    box-shadow: inset 0 -3px 0 #fff, inset 0 -4px 0 #d5d5d5;
}
.results-head {
    height: 41px;
    flex: none;
    display: flex;
    align-items: center;
    padding: 0 0 2px 24px;
    border-bottom: 1px solid #ddd;
}
.results-head h2 {
    width: 181px;
}
.explore {
    margin-left: 39px;
}
.explore svg {
    width: 16px;
    height: 15px;
    margin-right: 4px;
}
.explore + .caret {
    margin-left: 9px;
}
.job-status {
    height: 39px;
    flex: none;
    padding: 13px 0 0 12px;
    font-size: 12px;
    color: #5f6368;
}
.result-tabs {
    height: 26px;
    flex: none;
    display: flex;
    padding-left: 12px;
    gap: 24px;
    border-bottom: 1px solid #ddd;
    font-size: 12px;
    font-weight: 500;
    color: #5f6368;
    white-space: nowrap;
}
.result-tabs span {
    height: 26px;
    padding-top: 2px;
}
.result-tabs .current {
    color: #3f51d9;
    border-bottom: 2px solid #3f51d9;
}
.table-wrap {
    height: 298px;
    flex: none;
    display: flex;
}
.table-area {
    position: relative;
    flex: 1;
    overflow: hidden;
}
.collapse-tab {
    position: absolute;
    left: 0;
    top: 32px;
    width: 4px;
    height: 32px;
    border: 1px solid #ddd;
    border-left: none;
    border-radius: 0 2px 2px 0;
    background-color: #fff;
}
table.results {
    border-collapse: collapse;
    table-layout: fixed;
    width: 286px;
    font-size: 12px;
    color: #212121;
}
.results th {
    height: 31px;
    padding: 0 0 0 8px;
    background-color: #f5f5f5;
    border-bottom: 1px solid #ddd;
    border-right: 1px solid transparent;
    text-align: left;
    font-weight: 500;
    white-space: nowrap;
}
.results td {
    height: 29px;
    padding: 0 0 0 7px;
    border-right: 1px solid #e8e8e8;
    border-bottom: 1px solid #e8e8e8;
}
.results td:first-child {
    padding-left: 6px;
}
.results td.right {
    text-align: right;
    padding-right: 6px;
}
.c-row { width: 40px; }
.c-state { width: 44px; }
.c-gender { width: 54px; }
.c-year { width: 43px; }
.c-name { width: 47px; }
.c-num { width: 58px; }
```
